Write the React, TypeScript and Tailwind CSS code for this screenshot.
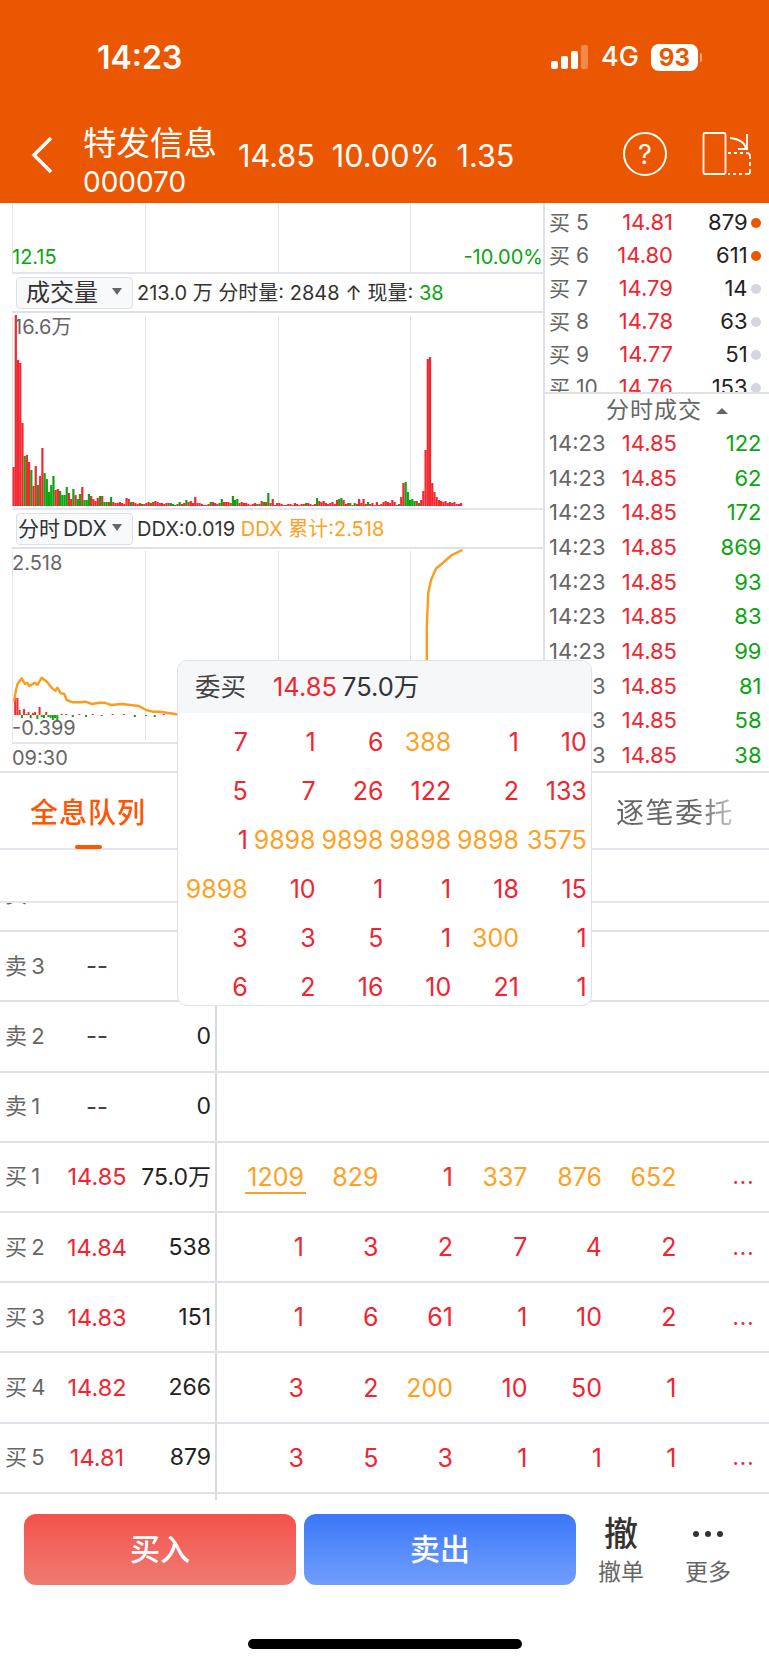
import React from "react";

const RED = "text-[#f2242f]";
const ORANGE = "text-[#ffa024]";
const GREEN = "text-[#0aa50f]";

// positive = red bar, negative = green bar, index is one minute
const volumes = [
  39, 191, 146, 143, 83, -50, 51, 44, -36, 20, 40, -21, 30, 58, -33, -27, -14, -21, -30, 16, 17, -15, -11, -11, -19, 13, 7, -17, 11,
  -7, -12, 19, -6, -6, -12, 10, 7, 5, 8, -10, 10, -4, -4, 4, -9, 4, 3, 3, 4, 3, 2, 8, 7, -4, 4, 3, 2, 3, -2, 2, 3, 4, -3, 4, 5, 4, 3,
  3, 2, 3, 3, -3, -2, -1, 2, -4, 2, 3, -6, 4, 5, 3, 9, 3, 3, 2, 1, 1, 2, -4, 4, 3, 2, -3, -7, 4, 4, 4, 3, -10, -6, -7, 3, 4, 3, 3, 2, 1,
  2, 3, -2, 2, 5, -4, 4, -13, 3, 7, 1, 3, 3, 2, 1, 1, 2, 2, 1, 3, 2, 1, 2, 2, -3, 3, 2, 1, 2, -8, 5, 4, 5, 3, 2, 3, 4, 2, 6, -7, -8, 6, 2, 3, -3, 1, -3, 2, 7, 3, 7, 2, -4, 2, 3, 1, 4, 1, 2, 4, 5, 4, 3, 6, 4, 1, -2, 9, 23, -24, -14, -6, -7, -5, 5, -3,
  6, 15, 56, 147, 149, 23, 14, 9, 6, 5, 4, 5, 3, 4, 3, 4, 2, 2, 3,
];

const ddxLine = [
  [40, 605], [46, 570], [50, 553], [62, 535], [72, 552], [78, 548], [85, 558], [100, 548], [108, 555], [120, 533], [135, 545],
  [150, 565], [160, 572], [165, 563], [175, 580], [185, 582], [192, 600], [210, 607], [230, 607], [245, 605], [265, 612],
  [285, 608], [300, 608], [320, 615], [350, 612], [400, 618], [420, 630], [440, 635], [460, 635], [490, 640], [520, 645],
  [1228, 640], [1228, 380], [1232, 280], [1240, 240], [1255, 205], [1275, 188], [1300, 165], [1330, 150],
]
  .map(([x, y]) => `${(x / 2.877 - 12).toFixed(1)},${(y / 3 - 49).toFixed(1)}`)
  .join(" ");

const ddxBars = [
  [1, 17], [2, 17], [3, 5], [4, -3], [5, 6], [6, 1], [7, 3], [8, -3], [9, 2], [10, 3], [11, -4], [12, 8], [13, -2], [14, -3], [15, 3], [16, -2], [17, -3], [18, -5], [19, -3], [20, -6],
  [22, 1], [24, 1], [27, -2], [30, 1], [33, -2], [36, 1], [40, -1], [45, 1], [50, 1], [55, -2], [60, -1], [64, -2], [68, 1],
];

const sideBook = [
  ["买 5", "14.81", "879", true],
  ["买 6", "14.80", "611", true],
  ["买 7", "14.79", "14", false],
  ["买 8", "14.78", "63", false],
  ["买 9", "14.77", "51", false],
  ["买 10", "14.76", "153", false],
] as const;

const trades = ["122", "62", "172", "869", "93", "83", "99", "81", "58", "38"];

const popupRows = [
  [7, 1, 6, 388, 1, 10],
  [5, 7, 26, 122, 2, 133],
  [1, 9898, 9898, 9898, 9898, 3575],
  [9898, 10, 1, 1, 18, 15],
  [3, 3, 5, 1, 300, 1],
  [6, 2, 16, 10, 21, 1],
];

const buyRows = [
  { label: "买 1", price: "14.85", vol: "75.0万", q: [1209, 829, 1, 337, 876, 652], more: true },
  { label: "买 2", price: "14.84", vol: "538", q: [1, 3, 2, 7, 4, 2], more: true },
  { label: "买 3", price: "14.83", vol: "151", q: [1, 6, 61, 1, 10, 2], more: true },
  { label: "买 4", price: "14.82", vol: "266", q: [3, 2, 200, 10, 50, 1], more: false },
  { label: "买 5", price: "14.81", vol: "879", q: [3, 5, 3, 1, 1, 1], more: true },
];

function GridLines() {
  return (
    <div className="absolute inset-0 flex">
      <div className="w-[133px] border-l border-[#e3e4ec]" />
      <div className="w-[133px] border-l border-[#e3e4ec]" />
      <div className="w-[133px] border-l border-[#e3e4ec]" />
      <div className="w-[133px] border-l border-[#e3e4ec]" />
    </div>
  );
}

function Picker({ text, textClass }: { text: string; textClass: string }) {
  return (
    <div className="ml-[4px] flex h-[32px] w-[117px] shrink-0 items-center justify-between rounded-[4px] border border-[#dcdfe5] bg-[#f8f9fb] pr-[10px]">
      <span className={`whitespace-nowrap text-[#333] leading-none ${textClass}`}>{text}</span>
      <span className="mb-[3px] h-0 w-0 border-x-[5px] border-t-[7px] border-x-transparent border-t-[#666]" />
    </div>
  );
}

function BookRow({ label, price, vol, q, more }: (typeof buyRows)[number]) {
  return (
    <div className="flex h-[70.2px] items-center border-b-2 border-[#e0e1e8]">
      <div className="flex h-full w-[217px] shrink-0 items-center border-r-2 border-[#d8dae2]">
        <span className="w-[64px] shrink-0 pl-[5px] text-[22px] text-[#666] [word-spacing:-2px]">{label}</span>
        <span className={`w-[66px] shrink-0 text-center text-[23.5px] ${RED}`}>{price}</span>
        <span className="w-[81px] shrink-0 text-right text-[23px] text-[#222]">{vol}</span>
      </div>
      <div className="ml-[12.5px] flex">
        {q.map((n, i) => (
          <span key={i} className={`w-[74.5px] text-right text-[25px] leading-[30px] ${n >= 200 ? ORANGE : RED}`}>
            {n === 1209 ? <span className={`-mr-[2px] border-b-2 border-[#ffa024] px-[2px] ${ORANGE}`}>{n}</span> : n}
          </span>
        ))}
      </div>
      {more && <span className={`ml-[56px] text-[22px] tracking-[1px] ${RED}`}>...</span>}
    </div>
  );
}

function SellRow({ label, vol }: { label: string; vol: string }) {
  return (
    <div className="flex h-[70.3px] items-center border-b-2 border-[#e0e1e8]">
      <div className="flex h-full w-[217px] shrink-0 items-center border-r-2 border-[#d8dae2]">
        <span className="w-[64px] shrink-0 pl-[5px] text-[22px] text-[#666] [word-spacing:-2px]">{label}</span>
        <span className="w-[66px] shrink-0 text-center text-[24px] text-[#444]">--</span>
        <span className="w-[81px] shrink-0 text-right text-[23px] text-[#222]">{vol}</span>
      </div>
    </div>
  );
}

export default function App() {
  return (
    <div className="relative h-[1665px] w-[769px] overflow-hidden bg-white font-['Inter','Noto_Sans_CJK_SC',sans-serif]">
      {/* status bar + title */}
      <header className="h-[203px] bg-[#eb5700] text-white">
        <div className="flex h-[114px] items-start">
          <span className="ml-[97px] mt-[39px] w-[90px] whitespace-nowrap text-[32px] font-semibold leading-[38px]">14:23</span>
          <svg className="ml-[363px] mt-[44px]" width="40" height="26" viewBox="0 0 40 26">
            <rect x="1" y="17" width="7" height="8" rx="2" fill="#fff" />
            <rect x="11" y="12" width="7" height="13" rx="2" fill="#fff" />
            <rect x="21" y="7" width="7" height="18" rx="2" fill="#fff" />
            <rect x="31" y="1" width="7" height="24" rx="2" fill="#fff" fillOpacity="0.3" />
          </svg>
          <span className="ml-[11px] mt-[40px] text-[27px] font-medium leading-[34px]">4G</span>
          <span className="ml-[12px] mt-[44px] flex h-[27px] w-[47px] items-center justify-center rounded-[8px] bg-white text-[24px] font-bold leading-none text-[#eb5700]">
            93
          </span>
          <span className="ml-[2px] mt-[53px] h-[9px] w-[2px] rounded-r-full bg-white/50" />
        </div>
        <div className="flex h-[89px] items-start">
          <svg className="ml-[30px] mt-[22px]" width="24" height="38" viewBox="0 0 24 38" fill="none" stroke="#fff" strokeWidth="3.5">
            <path d="M21 2 L4 19 L21 36" />
          </svg>
          <div className="ml-[29px] w-[155px] shrink-0">
            <div className="mt-[9px] whitespace-nowrap text-[33.5px] leading-[40px]">特发信息</div>
            <div className="mt-[3px] text-[28px] leading-[32px]">000070</div>
          </div>
          <div className="mt-[24px] flex gap-[17px] text-[30.6px] leading-[36px]">
            <span>14.85</span>
            <span>10.00%</span>
            <span>1.35</span>
          </div>
          <div className="absolute left-[623px] top-[132px] flex h-[44px] w-[44px] items-center justify-center rounded-full border-2 border-white text-[27px] leading-none">
            ?
          </div>
          <svg className="absolute left-[702px] top-[131px]" width="50" height="46" viewBox="0 0 50 46" fill="none" stroke="#fff" strokeWidth="1.8">
            <rect x="1.5" y="2" width="22" height="41" rx="1.5" />
            <path d="M26 22 H29 M32 22 H35 M38 22 H41 M44 22 C47 22 48 23 48 25 V28 M48 31 V35 M48 38 V41 C48 43 47 43 45 43 H43 M40 43 H37 M34 43 H31 M28 43 H26" />
            <path d="M28 7 C37 8 43 12 44 18 M45 3 V18 H36" />
          </svg>
        </div>
      </header>

      {/* charts + side book */}
      <div className="flex h-[570px] border-b-2 border-[#e0e1e8]">
        <div className="w-[545px] shrink-0 border-r-2 border-[#e0e1e8]">
          <div className="relative ml-[12px] h-[71px] border-b-2 border-[#e3e4ec]">
            <GridLines />
            <span className={`absolute bottom-[3px] left-0 text-[20px] leading-[24px] ${GREEN}`}>12.15</span>
            <span className={`absolute bottom-[3px] right-0 text-[20px] leading-[24px] ${GREEN}`}>-10.00%</span>
          </div>

          <div className="ml-[12px] flex h-[39px] items-center border-b-2 border-[#e0e1e8]">
            <Picker text="成交量" textClass="pl-[9px] text-[24px]" />
            <span className="ml-[4px] whitespace-nowrap text-[20px] text-[#333]">
              213.0 万 分时量: 2848 ↑ 现量: <span className={GREEN}>38</span>
            </span>
          </div>

          <div className="relative ml-[12px] h-[197px] border-b-2 border-[#e3e4ec]">
            <div className="absolute inset-x-0 bottom-[3px] top-[3px]">
              <GridLines />
            </div>
            <svg className="absolute left-0 top-0" width="531" height="193" viewBox="0 0 531 193">
              {volumes.map((v, i) => (
                <rect
                  key={i}
                  x={i * 2.215 + 0.5}
                  y={193 - Math.abs(v)}
                  width={2.2}
                  height={Math.abs(v)}
                  fill={v > 0 ? "#f5262e" : "#0aa50f"}
                />
              ))}
            </svg>
            <span className="absolute left-[2px] top-[2px] text-[20px] leading-[24px] text-[#666]">16.6万</span>
          </div>

          <div className="ml-[12px] flex h-[39px] items-center border-b-2 border-[#e0e1e8]">
            <Picker text="分时 DDX" textClass="pl-[1px] text-[21px] [word-spacing:-3px]" />
            <span className="ml-[4px] whitespace-nowrap text-[20px] text-[#333]">
              DDX:0.019 <span className={ORANGE}>DDX 累计:2.518</span>
            </span>
          </div>

          <div className="relative ml-[12px] h-[195px] border-b-2 border-[#e3e4ec]">
            <div className="absolute inset-x-0 bottom-[2px] top-[2px]">
              <GridLines />
            </div>
            <svg className="absolute left-0 top-0" width="531" height="195" viewBox="0 0 531 195">
              {ddxBars.map(([i, h]) => (
                <rect
                  key={i}
                  x={i * 2.215}
                  y={h > 0 ? 166 - h : 166}
                  width={2}
                  height={Math.abs(h)}
                  fill={h > 0 ? "#f5262e" : "#0aa50f"}
                />
              ))}
              <path d="M415 140 V158" stroke="#f5262e" strokeWidth="2" />
              <polyline points={ddxLine} fill="none" stroke="#ff9a1a" strokeWidth="2.4" strokeLinejoin="round" />
            </svg>
            <span className="absolute left-0 top-[2px] text-[20px] leading-[24px] text-[#666]">2.518</span>
            <span className="absolute left-0 top-[167px] text-[20px] leading-[24px] text-[#666]">-0.399</span>
          </div>

          <div className="ml-[12px] text-[20px] leading-[28px] text-[#666]">09:30</div>
        </div>

        <div className="min-w-0 flex-1">
          <div className="h-[191px] overflow-hidden border-b-2 border-[#e0e1e8] pt-[3px]">
            {sideBook.map(([label, price, vol, hot]) => (
              <div key={label} className="flex h-[33px] items-center text-[22px]">
                <span className="w-[66px] shrink-0 pl-[4px] text-[21px] text-[#666]">{label}</span>
                <span className={`w-[62px] shrink-0 text-right ${RED}`}>{price}</span>
                <span className="w-[74.6px] shrink-0 text-right text-[#222]">{vol}</span>
                <span className={`ml-[3px] h-[10px] w-[10px] shrink-0 rounded-full ${hot ? "bg-[#eb5700]" : "bg-[#d3d6dc]"}`} />
              </div>
            ))}
          </div>
          <div className="flex h-[32px] items-center justify-center gap-[14px] pl-[20px] pt-[1px] text-[23px] tracking-[1px] text-[#666]">
            <span>分时成交</span>
            <span className="h-0 w-0 border-x-[6px] border-b-[6px] border-x-transparent border-b-[#666]" />
          </div>
          {trades.map((t, i) => (
            <div key={i} className="flex h-[34.7px] items-center text-[22px]">
              <span className="w-[76px] shrink-0 pl-[4px] text-[#666]">14:23</span>
              <span className={`w-[56px] shrink-0 text-right ${RED}`}>14.85</span>
              <span className={`w-[84.5px] shrink-0 text-right ${GREEN}`}>{t}</span>
            </div>
          ))}
        </div>
      </div>

      {/* tabs */}
      <div className="flex h-[77px] items-start justify-between border-b-2 border-[#e3e4ec]">
        <div className="ml-[30px] mt-[20px] flex flex-col items-center">
          <span className="text-[28px] font-medium leading-[40px] tracking-[1px] text-[#ff5400]">全息队列</span>
          <span className="mt-[12px] h-[4px] w-[27px] rounded-full bg-[#ff5400]" />
        </div>
        <span className="mr-[35px] mt-[20px] bg-linear-to-r from-[#666] from-70% to-[#ccc] bg-clip-text text-[28px] leading-[40px] tracking-[1.5px] text-transparent">
          逐笔委托
        </span>
      </div>

      {/* sticky blank header, scrolled row underneath */}
      <div className="h-[53px] border-b-2 border-[#e3e4ec]" />
      <div className="h-[29px] overflow-hidden border-b-2 border-[#dfe0e8]">
        <div className="-mt-[24px] flex text-[22px] leading-[30px] text-[#666]">
          <span className="pl-[5px] [word-spacing:-2px]">卖 4</span>
        </div>
      </div>

      <SellRow label="卖 3" vol="0" />
      <SellRow label="卖 2" vol="0" />
      <SellRow label="卖 1" vol="0" />
      {buyRows.map((r) => (
        <BookRow key={r.label} {...r} />
      ))}
      <div className="ml-[215px] h-[6px] w-[2px] bg-[#d8dae2]" />

      {/* buy / sell bar */}
      <div className="mt-[14px] flex items-start">
        <button className="ml-[24px] h-[71px] w-[272px] rounded-[12px] bg-linear-to-b from-[#f4514a] to-[#ef7a72] text-[30px] font-medium text-white">
          买入
        </button>
        <button className="ml-[8px] h-[71px] w-[272px] rounded-[12px] bg-linear-to-b from-[#3a77f8] to-[#709efe] text-[30px] font-medium text-white">
          卖出
        </button>
        <div className="ml-[22px] flex w-[46px] flex-col items-center">
          <span className="text-[34px] font-medium leading-[40px] text-[#333]">撤</span>
          <span className="mt-[4px] whitespace-nowrap text-[23px] leading-[28px] text-[#666]">撤单</span>
        </div>
        <div className="ml-[41px] flex w-[46px] flex-col items-center">
          <div className="flex h-[40px] items-center gap-[6px]">
            <span className="h-[6px] w-[6px] rounded-full bg-[#333]" />
            <span className="h-[6px] w-[6px] rounded-full bg-[#333]" />
            <span className="h-[6px] w-[6px] rounded-full bg-[#333]" />
          </div>
          <span className="mt-[4px] whitespace-nowrap text-[23px] leading-[28px] text-[#666]">更多</span>
        </div>
      </div>
      <div className="mx-auto mt-[53px] h-[10px] w-[274px] rounded-full bg-black" />

      {/* order queue popup */}
      <div className="absolute left-[177px] top-[660px] h-[346px] w-[415px] overflow-hidden rounded-[10px] border border-[#dfe1e7] bg-white">
        <div className="flex h-[52px] items-center bg-[#f6f7f9] pl-[17px] text-[25.5px]">
          <span className="w-[78px] text-[#444]">委买</span>
          <span className={RED}>14.85</span>
          <span className="ml-[5px] text-[#333]">75.0万</span>
        </div>
        <div className="pl-[2px] pt-[5px]">
          {popupRows.map((row, i) => (
            <div key={i} className="flex h-[49px] items-center">
              {row.map((n, j) => (
                <span key={j} className={`w-[67.8px] text-right text-[25px] ${n >= 200 ? ORANGE : RED}`}>
                  {n}
                </span>
              ))}
            </div>
          ))}
        </div>
      </div>
    </div>
  );
}
